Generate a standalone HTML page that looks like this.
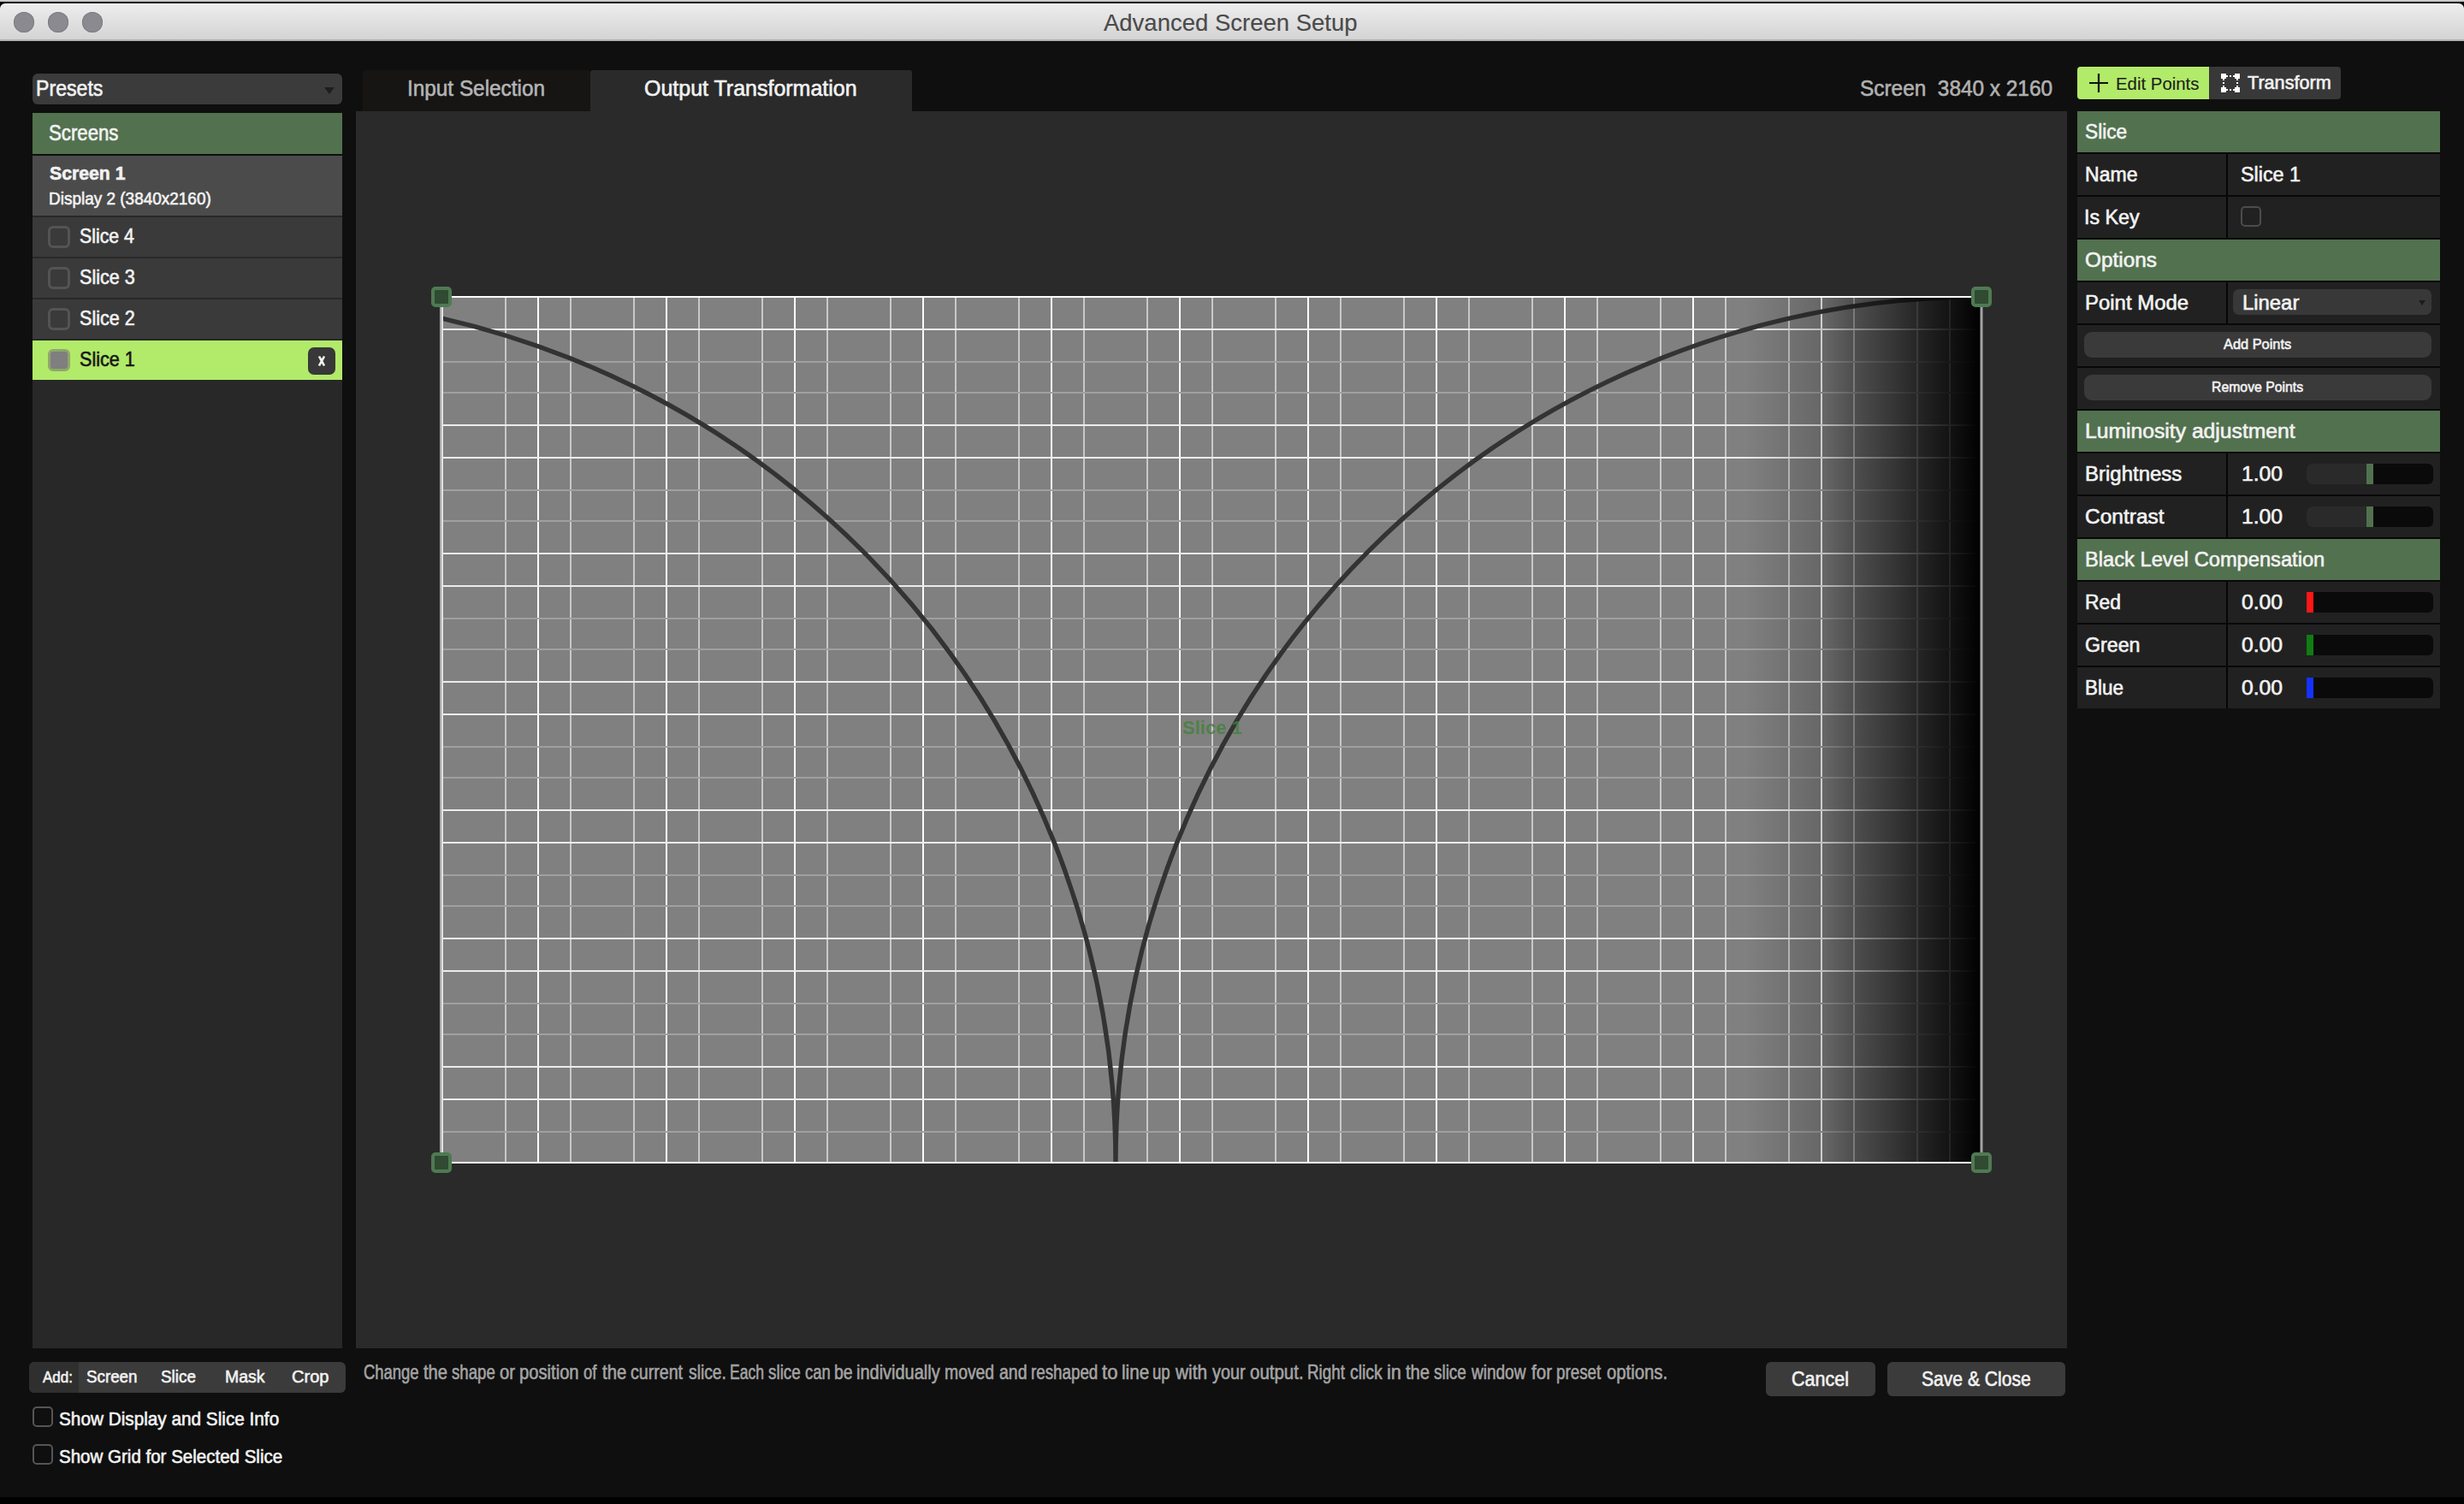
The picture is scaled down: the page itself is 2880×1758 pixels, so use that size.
<!DOCTYPE html>
<html><head><meta charset="utf-8"><title>Advanced Screen Setup</title>
<style>
html,body{margin:0;padding:0;width:2880px;height:1758px;overflow:hidden;background:#000;}
.r{position:absolute;box-sizing:content-box;}
.t{position:absolute;white-space:pre;line-height:1;font-family:"Liberation Sans",sans-serif;transform-origin:0 0;-webkit-text-stroke:0.6px currentColor;}
</style></head><body>
<div class="r" style="left:0px;top:0px;width:2880px;height:2px;background:#c9c9c9;"></div>
<div class="r" style="left:0px;top:2px;width:2880px;height:10px;background:#000;"></div>
<div class="r" style="left:0px;top:4px;width:2880px;height:42px;background:linear-gradient(#ffffff 0px,#ececec 2px,#d4d4d4 100%);border-radius:6px 6px 0 0"></div>
<div class="r" style="left:0px;top:46px;width:2880px;height:2px;background:#b2b2b2;"></div>
<div class="r" style="left:0px;top:48px;width:2880px;height:1702px;background:#0f0f0f;"></div>
<div class="r" style="left:16px;top:14px;width:24px;height:24px;border-radius:50%;background:#8c8a91;box-shadow:inset 0 0 0 1px #7d7b82"></div>
<div class="r" style="left:56px;top:14px;width:24px;height:24px;border-radius:50%;background:#8c8a91;box-shadow:inset 0 0 0 1px #7d7b82"></div>
<div class="r" style="left:96px;top:14px;width:24px;height:24px;border-radius:50%;background:#8c8a91;box-shadow:inset 0 0 0 1px #7d7b82"></div>
<div class="r" style="left:38px;top:86px;width:362px;height:36px;background:#3b3b3b;border-radius:6px"></div>
<svg class="r" style="left:378px;top:100px" width="14" height="12"><path d="M1 2 L13 2 L7 10 Z" fill="#1e1e1e"/></svg>
<div class="r" style="left:38px;top:132px;width:362px;height:48px;background:#52714f;"></div>
<div class="r" style="left:38px;top:182px;width:362px;height:1394px;background:#282828;"></div>
<div class="r" style="left:38px;top:182px;width:362px;height:70px;background:#4b4b4b;"></div>
<div class="r" style="left:38px;top:254px;width:362px;height:46px;background:#3a3a3a;"></div>
<div class="r" style="left:56px;top:264px;width:20px;height:20px;border:3px solid #545454;border-radius:6px"></div>
<div class="r" style="left:38px;top:302px;width:362px;height:46px;background:#3a3a3a;"></div>
<div class="r" style="left:56px;top:312px;width:20px;height:20px;border:3px solid #545454;border-radius:6px"></div>
<div class="r" style="left:38px;top:350px;width:362px;height:46px;background:#3a3a3a;"></div>
<div class="r" style="left:56px;top:360px;width:20px;height:20px;border:3px solid #545454;border-radius:6px"></div>
<div class="r" style="left:38px;top:398px;width:362px;height:46px;background:#b2ea6a;"></div>
<div class="r" style="left:56px;top:408px;width:20px;height:20px;border:3px solid #8fa86c;border-radius:6px;background:#7f7f7f"></div>
<div class="r" style="left:360px;top:406px;width:32px;height:32px;background:#383838;border-radius:7px"></div>
<svg class="r" style="left:360px;top:406px" width="32" height="32"><path d="M13 10.5 L16 16 L19 10.5 M13 21.5 L16 16 L19 21.5" fill="none" stroke="#f4f4f4" stroke-width="2.6" stroke-linejoin="miter"/></svg>
<div class="r" style="left:34px;top:1592px;width:370px;height:36px;background:#3b3b3b;border-radius:6px;overflow:hidden"></div>
<div class="r" style="left:34px;top:1592px;width:58px;height:36px;background:#2f2f2f;border-radius:6px 0 0 6px"></div>
<div class="r" style="left:38px;top:1644px;width:20px;height:20px;border:2.5px solid #555;border-radius:5px"></div>
<div class="r" style="left:38px;top:1688px;width:20px;height:20px;border:2.5px solid #555;border-radius:5px"></div>
<div class="r" style="left:424px;top:82px;width:266px;height:48px;background:#161513;border-radius:3px 3px 0 0"></div>
<div class="r" style="left:690px;top:82px;width:376px;height:48px;background:#2a2a2a;border-radius:3px 3px 0 0"></div>
<div class="r" style="left:416px;top:130px;width:2000px;height:1446px;background:#2a2a2a;"></div>
<div class="r" style="left:2064px;top:1592px;width:128px;height:40px;background:#3b3b3b;border-radius:6px"></div>
<div class="r" style="left:2206px;top:1592px;width:208px;height:40px;background:#3b3b3b;border-radius:6px"></div>
<div class="r" style="left:2428px;top:78px;width:308px;height:38px;background:#383838;border-radius:4px"></div>
<div class="r" style="left:2428px;top:78px;width:154px;height:38px;background:#b2ea6a;border-radius:4px 0 0 4px"></div>
<svg class="r" style="left:2440px;top:84px" width="26" height="26"><path d="M2 13 H24 M13 2 V24" stroke="#111" stroke-width="2.2"/></svg>
<svg class="r" style="left:2596px;top:86px" width="22" height="22" fill="#fff"><path d="M0 0 H6 V2 H8 V4 H6 V6 H4 V8 H2 V6 H0 Z M16 0 H22 V6 H20 V8 H18 V6 H16 V4 H14 V2 H16 Z M0 16 H2 V14 H4 V16 H6 V18 H8 V20 H6 V22 H0 Z M16 16 H18 V14 H20 V16 H22 V22 H16 V20 H14 V18 H16 Z"/><rect x="10" y="2" width="2" height="2"/><rect x="2" y="10" width="2" height="2"/><rect x="18" y="10" width="2" height="2"/><rect x="10" y="18" width="2" height="2"/></svg>
<div class="r" style="left:2428px;top:130px;width:424px;height:698px;background:#080808;"></div>
<div class="r" style="left:2428px;top:130px;width:424px;height:48px;background:#52714f;"></div>
<div class="r" style="left:2428px;top:180px;width:424px;height:48px;background:#212121;"></div>
<div class="r" style="left:2602px;top:180px;width:2px;height:48px;background:#050505;"></div>
<div class="r" style="left:2428px;top:230px;width:424px;height:48px;background:#212121;"></div>
<div class="r" style="left:2602px;top:230px;width:2px;height:48px;background:#050505;"></div>
<div class="r" style="left:2428px;top:280px;width:424px;height:48px;background:#52714f;"></div>
<div class="r" style="left:2428px;top:330px;width:424px;height:48px;background:#212121;"></div>
<div class="r" style="left:2602px;top:330px;width:2px;height:48px;background:#050505;"></div>
<div class="r" style="left:2428px;top:380px;width:424px;height:48px;background:#212121;"></div>
<div class="r" style="left:2428px;top:430px;width:424px;height:48px;background:#212121;"></div>
<div class="r" style="left:2428px;top:480px;width:424px;height:48px;background:#52714f;"></div>
<div class="r" style="left:2428px;top:530px;width:424px;height:48px;background:#212121;"></div>
<div class="r" style="left:2602px;top:530px;width:2px;height:48px;background:#050505;"></div>
<div class="r" style="left:2428px;top:580px;width:424px;height:48px;background:#212121;"></div>
<div class="r" style="left:2602px;top:580px;width:2px;height:48px;background:#050505;"></div>
<div class="r" style="left:2428px;top:630px;width:424px;height:48px;background:#52714f;"></div>
<div class="r" style="left:2428px;top:680px;width:424px;height:48px;background:#212121;"></div>
<div class="r" style="left:2602px;top:680px;width:2px;height:48px;background:#050505;"></div>
<div class="r" style="left:2428px;top:730px;width:424px;height:48px;background:#212121;"></div>
<div class="r" style="left:2602px;top:730px;width:2px;height:48px;background:#050505;"></div>
<div class="r" style="left:2428px;top:780px;width:424px;height:48px;background:#212121;"></div>
<div class="r" style="left:2602px;top:780px;width:2px;height:48px;background:#050505;"></div>
<div class="r" style="left:2619px;top:241px;width:20px;height:20px;border:2.5px solid #4c4c4c;border-radius:5px"></div>
<div class="r" style="left:2610px;top:338px;width:232px;height:30px;background:#383838;border-radius:7px"></div>
<svg class="r" style="left:2826px;top:350px" width="10" height="9"><path d="M1 1 L9 1 L5 7 Z" fill="#1c1c1c"/></svg>
<div class="r" style="left:2436px;top:388px;width:406px;height:30px;background:#3a3a3a;border-radius:9px"></div>
<div class="r" style="left:2436px;top:438px;width:406px;height:30px;background:#3a3a3a;border-radius:9px"></div>
<div class="r" style="left:2696px;top:542px;width:148px;height:24px;border-radius:6px;overflow:hidden;background:#0a0a0a"><div style="position:absolute;left:0;top:0;width:70px;height:24px;background:#2a2a2a"></div><div style="position:absolute;left:70px;top:0;width:8px;height:24px;background:#52714f"></div></div>
<div class="r" style="left:2696px;top:592px;width:148px;height:24px;border-radius:6px;overflow:hidden;background:#0a0a0a"><div style="position:absolute;left:0;top:0;width:70px;height:24px;background:#2a2a2a"></div><div style="position:absolute;left:70px;top:0;width:8px;height:24px;background:#52714f"></div></div>
<div class="r" style="left:2696px;top:692px;width:148px;height:24px;border-radius:6px;background:#0a0a0a"></div><div class="r" style="left:2696px;top:692px;width:8px;height:24px;background:#ff1616"></div>
<div class="r" style="left:2696px;top:742px;width:148px;height:24px;border-radius:6px;background:#0a0a0a"></div><div class="r" style="left:2696px;top:742px;width:8px;height:24px;background:#0f7d12"></div>
<div class="r" style="left:2696px;top:792px;width:148px;height:24px;border-radius:6px;background:#0a0a0a"></div><div class="r" style="left:2696px;top:792px;width:8px;height:24px;background:#1432ff"></div>
<svg class="r" style="left:496px;top:327px" width="1840" height="1052" viewBox="496 327 1840 1052">
<defs><linearGradient id="fade" x1="0" x2="1" y1="0" y2="0"><stop offset="0" stop-color="#000" stop-opacity="0"/><stop offset="0.18" stop-color="#000" stop-opacity="0.11"/><stop offset="0.33" stop-color="#000" stop-opacity="0.2"/><stop offset="0.46" stop-color="#000" stop-opacity="0.39"/><stop offset="0.636" stop-color="#000" stop-opacity="0.59"/><stop offset="0.73" stop-color="#000" stop-opacity="0.71"/><stop offset="0.87" stop-color="#000" stop-opacity="0.86"/><stop offset="1" stop-color="#000" stop-opacity="1"/></linearGradient>
<clipPath id="gc"><rect x="516" y="347" width="1800" height="1012"/></clipPath></defs>
<rect x="516" y="347" width="1800" height="1012" fill="#808080"/>
<rect x="590" y="347" width="2" height="1012" fill="#c8c8c8"/>
<rect x="628" y="347" width="2" height="1012" fill="#ffffff"/>
<rect x="666" y="347" width="2" height="1012" fill="#c8c8c8"/>
<rect x="740" y="347" width="2" height="1012" fill="#c8c8c8"/>
<rect x="778" y="347" width="2" height="1012" fill="#ffffff"/>
<rect x="816" y="347" width="2" height="1012" fill="#c8c8c8"/>
<rect x="890" y="347" width="2" height="1012" fill="#c8c8c8"/>
<rect x="928" y="347" width="2" height="1012" fill="#ffffff"/>
<rect x="966" y="347" width="2" height="1012" fill="#c8c8c8"/>
<rect x="1040" y="347" width="2" height="1012" fill="#c8c8c8"/>
<rect x="1078" y="347" width="2" height="1012" fill="#ffffff"/>
<rect x="1116" y="347" width="2" height="1012" fill="#c8c8c8"/>
<rect x="1190" y="347" width="2" height="1012" fill="#c8c8c8"/>
<rect x="1228" y="347" width="2" height="1012" fill="#ffffff"/>
<rect x="1266" y="347" width="2" height="1012" fill="#c8c8c8"/>
<rect x="1340" y="347" width="2" height="1012" fill="#c8c8c8"/>
<rect x="1378" y="347" width="2" height="1012" fill="#ffffff"/>
<rect x="1416" y="347" width="2" height="1012" fill="#c8c8c8"/>
<rect x="1490" y="347" width="2" height="1012" fill="#c8c8c8"/>
<rect x="1528" y="347" width="2" height="1012" fill="#ffffff"/>
<rect x="1566" y="347" width="2" height="1012" fill="#c8c8c8"/>
<rect x="1640" y="347" width="2" height="1012" fill="#c8c8c8"/>
<rect x="1678" y="347" width="2" height="1012" fill="#ffffff"/>
<rect x="1716" y="347" width="2" height="1012" fill="#c8c8c8"/>
<rect x="1790" y="347" width="2" height="1012" fill="#c8c8c8"/>
<rect x="1828" y="347" width="2" height="1012" fill="#ffffff"/>
<rect x="1866" y="347" width="2" height="1012" fill="#c8c8c8"/>
<rect x="1940" y="347" width="2" height="1012" fill="#c8c8c8"/>
<rect x="1978" y="347" width="2" height="1012" fill="#ffffff"/>
<rect x="2016" y="347" width="2" height="1012" fill="#c8c8c8"/>
<rect x="2090" y="347" width="2" height="1012" fill="#c8c8c8"/>
<rect x="2128" y="347" width="2" height="1012" fill="#ffffff"/>
<rect x="2166" y="347" width="2" height="1012" fill="#c8c8c8"/>
<rect x="2240" y="347" width="2" height="1012" fill="#c8c8c8"/>
<rect x="2278" y="347" width="2" height="1012" fill="#ffffff"/>
<rect x="516" y="384" width="1800" height="2" fill="#ececec"/>
<rect x="516" y="422" width="1800" height="2" fill="#a0a0a0"/>
<rect x="516" y="458" width="1800" height="2" fill="#a0a0a0"/>
<rect x="516" y="496" width="1800" height="2" fill="#ececec"/>
<rect x="516" y="534" width="1800" height="2" fill="#ececec"/>
<rect x="516" y="572" width="1800" height="2" fill="#a0a0a0"/>
<rect x="516" y="608" width="1800" height="2" fill="#a0a0a0"/>
<rect x="516" y="646" width="1800" height="2" fill="#ececec"/>
<rect x="516" y="684" width="1800" height="2" fill="#ececec"/>
<rect x="516" y="722" width="1800" height="2" fill="#a0a0a0"/>
<rect x="516" y="758" width="1800" height="2" fill="#a0a0a0"/>
<rect x="516" y="796" width="1800" height="2" fill="#ececec"/>
<rect x="516" y="834" width="1800" height="2" fill="#ececec"/>
<rect x="516" y="872" width="1800" height="2" fill="#a0a0a0"/>
<rect x="516" y="908" width="1800" height="2" fill="#a0a0a0"/>
<rect x="516" y="946" width="1800" height="2" fill="#ececec"/>
<rect x="516" y="984" width="1800" height="2" fill="#ececec"/>
<rect x="516" y="1022" width="1800" height="2" fill="#a0a0a0"/>
<rect x="516" y="1058" width="1800" height="2" fill="#a0a0a0"/>
<rect x="516" y="1096" width="1800" height="2" fill="#ececec"/>
<rect x="516" y="1134" width="1800" height="2" fill="#ececec"/>
<rect x="516" y="1172" width="1800" height="2" fill="#a0a0a0"/>
<rect x="516" y="1208" width="1800" height="2" fill="#a0a0a0"/>
<rect x="516" y="1246" width="1800" height="2" fill="#ececec"/>
<rect x="516" y="1284" width="1800" height="2" fill="#ececec"/>
<rect x="516" y="1322" width="1800" height="2" fill="#a0a0a0"/>
<g clip-path="url(#gc)"><path d="M 292 347 A 1012 1012 0 0 1 1304 1359 A 1012 1012 0 0 1 2316 347" fill="none" stroke="#333333" stroke-width="5.4"/></g>
<rect x="2040" y="347" width="276" height="1012" fill="url(#fade)"/>
<rect x="514" y="346" width="1804" height="2" fill="#ffffff"/>
<rect x="514" y="1358" width="1804" height="2" fill="#ffffff"/>
<rect x="514" y="347" width="1.5" height="1012" fill="#a8a8a8"/>
<rect x="515.5" y="347" width="2.5" height="1012" fill="#e2e2e2"/>
<rect x="2314.5" y="347" width="3" height="1012" fill="#a4a4a4"/>
<rect x="506" y="337" width="20" height="20" rx="3" fill="#304b32" stroke="#4f7a52" stroke-width="4"/>
<rect x="2306" y="337" width="20" height="20" rx="3" fill="#304b32" stroke="#4f7a52" stroke-width="4"/>
<rect x="506" y="1349" width="20" height="20" rx="3" fill="#304b32" stroke="#4f7a52" stroke-width="4"/>
<rect x="2306" y="1349" width="20" height="20" rx="3" fill="#304b32" stroke="#4f7a52" stroke-width="4"/>
</svg>
<span class="t" style="left:1290.0px;top:12.7px;font-size:27.54px;color:#4a4a4a;font-weight:normal;transform:scaleX(0.9985);-webkit-text-stroke:0.15px currentColor">Advanced Screen Setup</span>
<span class="t" style="left:42.2px;top:91.2px;font-size:25.22px;color:#f2f2f2;font-weight:normal;transform:scaleX(0.9174);">Presets</span>
<span class="t" style="left:57.1px;top:143.2px;font-size:25.22px;color:#f2f2f2;font-weight:normal;transform:scaleX(0.8805);">Screens</span>
<span class="t" style="left:58.0px;top:191.5px;font-size:22.46px;color:#f2f2f2;font-weight:bold;transform:scaleX(0.9449);">Screen 1</span>
<span class="t" style="left:57.1px;top:222.4px;font-size:20.29px;color:#f2f2f2;font-weight:normal;transform:scaleX(0.9352);">Display 2 (3840x2160)</span>
<span class="t" style="left:93.1px;top:264.9px;font-size:23.19px;color:#f2f2f2;font-weight:normal;transform:scaleX(0.9175);">Slice 4</span>
<span class="t" style="left:93.1px;top:312.9px;font-size:23.19px;color:#f2f2f2;font-weight:normal;transform:scaleX(0.9311);">Slice 3</span>
<span class="t" style="left:93.1px;top:360.9px;font-size:23.19px;color:#f2f2f2;font-weight:normal;transform:scaleX(0.9311);">Slice 2</span>
<span class="t" style="left:93.1px;top:408.9px;font-size:23.19px;color:#161616;font-weight:normal;transform:scaleX(0.9311);">Slice 1</span>
<span class="t" style="left:50.0px;top:1601.2px;font-size:18.12px;color:#f2f2f2;font-weight:normal;transform:scaleX(0.9387);">Add:</span>
<span class="t" style="left:101.0px;top:1599.0px;font-size:20.72px;color:#f2f2f2;font-weight:normal;transform:scaleX(0.9060);">Screen</span>
<span class="t" style="left:188.0px;top:1599.0px;font-size:20.72px;color:#f2f2f2;font-weight:normal;transform:scaleX(0.9125);">Slice</span>
<span class="t" style="left:263.1px;top:1599.0px;font-size:20.72px;color:#f2f2f2;font-weight:normal;transform:scaleX(0.9361);">Mask</span>
<span class="t" style="left:341.0px;top:1599.0px;font-size:20.72px;color:#f2f2f2;font-weight:normal;transform:scaleX(0.9681);">Crop</span>
<span class="t" style="left:69.1px;top:1647.9px;font-size:22.03px;color:#f2f2f2;font-weight:normal;transform:scaleX(0.9424);">Show Display and Slice Info</span>
<span class="t" style="left:69.1px;top:1692.4px;font-size:22.03px;color:#f2f2f2;font-weight:normal;transform:scaleX(0.9320);">Show Grid for Selected Slice</span>
<span class="t" style="left:476.1px;top:91.0px;font-size:25.36px;color:#b4b4b4;font-weight:normal;transform:scaleX(0.9595);">Input Selection</span>
<span class="t" style="left:753.0px;top:91.0px;font-size:25.36px;color:#f2f2f2;font-weight:normal;transform:scaleX(0.9854);">Output Transformation</span>
<span class="t" style="left:2174.0px;top:91.0px;font-size:25.36px;color:#b0b0b0;font-weight:normal;transform:scaleX(0.9616);">Screen  3840 x 2160</span>
<span class="t" style="left:424.9px;top:1592.9px;font-size:23.19px;color:#a4a4a4;font-weight:normal;transform:scaleX(0.7946);">Change</span>
<span class="t" style="left:494.7px;top:1592.9px;font-size:23.19px;color:#a4a4a4;font-weight:normal;transform:scaleX(0.8715);">the</span>
<span class="t" style="left:528.0px;top:1592.9px;font-size:23.19px;color:#a4a4a4;font-weight:normal;transform:scaleX(0.8032);">shape</span>
<span class="t" style="left:584.0px;top:1592.9px;font-size:23.19px;color:#a4a4a4;font-weight:normal;transform:scaleX(0.8761);">or</span>
<span class="t" style="left:607.4px;top:1592.9px;font-size:23.19px;color:#a4a4a4;font-weight:normal;transform:scaleX(0.8707);">position</span>
<span class="t" style="left:682.2px;top:1592.9px;font-size:23.19px;color:#a4a4a4;font-weight:normal;transform:scaleX(0.7945);">of</span>
<span class="t" style="left:704.0px;top:1592.9px;font-size:23.19px;color:#a4a4a4;font-weight:normal;transform:scaleX(0.8747);">the</span>
<span class="t" style="left:737.4px;top:1592.9px;font-size:23.19px;color:#a4a4a4;font-weight:normal;transform:scaleX(0.8462);">current</span>
<span class="t" style="left:804.9px;top:1592.9px;font-size:23.19px;color:#a4a4a4;font-weight:normal;transform:scaleX(0.8315);">slice.</span>
<span class="t" style="left:852.8px;top:1592.9px;font-size:23.19px;color:#a4a4a4;font-weight:normal;transform:scaleX(0.7579);">Each</span>
<span class="t" style="left:898.2px;top:1592.9px;font-size:23.19px;color:#a4a4a4;font-weight:normal;transform:scaleX(0.8138);">slice</span>
<span class="t" style="left:941.2px;top:1592.9px;font-size:23.19px;color:#a4a4a4;font-weight:normal;transform:scaleX(0.7924);">can</span>
<span class="t" style="left:975.3px;top:1592.9px;font-size:23.19px;color:#a4a4a4;font-weight:normal;transform:scaleX(0.8373);">be</span>
<span class="t" style="left:1001.2px;top:1592.9px;font-size:23.19px;color:#a4a4a4;font-weight:normal;transform:scaleX(0.8611);">individually</span>
<span class="t" style="left:1104.4px;top:1592.9px;font-size:23.19px;color:#a4a4a4;font-weight:normal;transform:scaleX(0.8350);">moved</span>
<span class="t" style="left:1167.7px;top:1592.9px;font-size:23.19px;color:#a4a4a4;font-weight:normal;transform:scaleX(0.8392);">and</span>
<span class="t" style="left:1204.6px;top:1592.9px;font-size:23.19px;color:#a4a4a4;font-weight:normal;transform:scaleX(0.8096);">reshaped</span>
<span class="t" style="left:1288.1px;top:1592.9px;font-size:23.19px;color:#a4a4a4;font-weight:normal;transform:scaleX(0.9546);">to</span>
<span class="t" style="left:1310.8px;top:1592.9px;font-size:23.19px;color:#a4a4a4;font-weight:normal;transform:scaleX(0.8923);">line</span>
<span class="t" style="left:1347.4px;top:1592.9px;font-size:23.19px;color:#a4a4a4;font-weight:normal;transform:scaleX(0.8038);">up</span>
<span class="t" style="left:1374.3px;top:1592.9px;font-size:23.19px;color:#a4a4a4;font-weight:normal;transform:scaleX(0.8979);">with</span>
<span class="t" style="left:1416.5px;top:1592.9px;font-size:23.19px;color:#a4a4a4;font-weight:normal;transform:scaleX(0.8532);">your</span>
<span class="t" style="left:1461.2px;top:1592.9px;font-size:23.19px;color:#a4a4a4;font-weight:normal;transform:scaleX(0.8830);">output.</span>
<span class="t" style="left:1527.7px;top:1592.9px;font-size:23.19px;color:#a4a4a4;font-weight:normal;transform:scaleX(0.8107);">Right</span>
<span class="t" style="left:1578.0px;top:1592.9px;font-size:23.19px;color:#a4a4a4;font-weight:normal;transform:scaleX(0.8336);">click</span>
<span class="t" style="left:1621.0px;top:1592.9px;font-size:23.19px;color:#a4a4a4;font-weight:normal;transform:scaleX(0.9351);">in</span>
<span class="t" style="left:1643.0px;top:1592.9px;font-size:23.19px;color:#a4a4a4;font-weight:normal;transform:scaleX(0.8715);">the</span>
<span class="t" style="left:1676.3px;top:1592.9px;font-size:23.19px;color:#a4a4a4;font-weight:normal;transform:scaleX(0.8138);">slice</span>
<span class="t" style="left:1720.1px;top:1592.9px;font-size:23.19px;color:#a4a4a4;font-weight:normal;transform:scaleX(0.8199);">window</span>
<span class="t" style="left:1789.7px;top:1592.9px;font-size:23.19px;color:#a4a4a4;font-weight:normal;transform:scaleX(0.8856);">for</span>
<span class="t" style="left:1819.1px;top:1592.9px;font-size:23.19px;color:#a4a4a4;font-weight:normal;transform:scaleX(0.8098);">preset</span>
<span class="t" style="left:1877.7px;top:1592.9px;font-size:23.19px;color:#a4a4a4;font-weight:normal;transform:scaleX(0.8756);">options.</span>
<span class="t" style="left:2094.1px;top:1601.4px;font-size:23.19px;color:#f2f2f2;font-weight:normal;transform:scaleX(0.9288);">Cancel</span>
<span class="t" style="left:2246.1px;top:1601.4px;font-size:23.19px;color:#f2f2f2;font-weight:normal;transform:scaleX(0.9097);">Save &amp; Close</span>
<span class="t" style="left:2473.0px;top:86.7px;font-size:21.01px;color:#1c1c1c;font-weight:normal;transform:scaleX(0.9708);-webkit-text-stroke:0.1px currentColor">Edit Points</span>
<span class="t" style="left:2627.0px;top:86.1px;font-size:21.74px;color:#f2f2f2;font-weight:normal;transform:scaleX(0.9943);">Transform</span>
<span class="t" style="left:2437.0px;top:142.3px;font-size:23.91px;color:#f2f2f2;font-weight:normal;transform:scaleX(0.9501);">Slice</span>
<span class="t" style="left:2437.0px;top:192.6px;font-size:23.48px;color:#f2f2f2;font-weight:normal;transform:scaleX(0.9829);">Name</span>
<span class="t" style="left:2619.0px;top:192.6px;font-size:23.48px;color:#f2f2f2;font-weight:normal;transform:scaleX(0.9943);">Slice 1</span>
<span class="t" style="left:2436.0px;top:242.6px;font-size:23.48px;color:#f2f2f2;font-weight:normal;transform:scaleX(0.9924);">Is Key</span>
<span class="t" style="left:2437.0px;top:292.3px;font-size:23.91px;color:#f2f2f2;font-weight:normal;transform:scaleX(1.0192);">Options</span>
<span class="t" style="left:2437.0px;top:342.6px;font-size:23.48px;color:#f2f2f2;font-weight:normal;transform:scaleX(1.0198);">Point Mode</span>
<span class="t" style="left:2621.0px;top:342.6px;font-size:23.48px;color:#f2f2f2;font-weight:normal;transform:scaleX(1.0167);">Linear</span>
<span class="t" style="left:2598.5px;top:393.8px;font-size:17.39px;color:#f2f2f2;font-weight:normal;transform:scaleX(0.9426);">Add Points</span>
<span class="t" style="left:2584.6px;top:443.8px;font-size:17.39px;color:#f2f2f2;font-weight:normal;transform:scaleX(0.9093);">Remove Points</span>
<span class="t" style="left:2437.0px;top:492.3px;font-size:23.91px;color:#f2f2f2;font-weight:normal;transform:scaleX(1.0329);">Luminosity adjustment</span>
<span class="t" style="left:2437.0px;top:542.6px;font-size:23.48px;color:#f2f2f2;font-weight:normal;transform:scaleX(1.0216);">Brightness</span>
<span class="t" style="left:2619.9px;top:542.6px;font-size:23.48px;color:#f2f2f2;font-weight:normal;transform:scaleX(1.0532);">1.00</span>
<span class="t" style="left:2437.0px;top:592.6px;font-size:23.48px;color:#f2f2f2;font-weight:normal;transform:scaleX(1.0434);">Contrast</span>
<span class="t" style="left:2619.9px;top:592.6px;font-size:23.48px;color:#f2f2f2;font-weight:normal;transform:scaleX(1.0532);">1.00</span>
<span class="t" style="left:2437.0px;top:642.3px;font-size:23.91px;color:#f2f2f2;font-weight:normal;transform:scaleX(0.9902);">Black Level Compensation</span>
<span class="t" style="left:2437.0px;top:692.6px;font-size:23.48px;color:#f2f2f2;font-weight:normal;transform:scaleX(0.9756);">Red</span>
<span class="t" style="left:2620.0px;top:692.6px;font-size:23.48px;color:#f2f2f2;font-weight:normal;transform:scaleX(1.0521);">0.00</span>
<span class="t" style="left:2437.0px;top:742.6px;font-size:23.48px;color:#f2f2f2;font-weight:normal;transform:scaleX(0.9893);">Green</span>
<span class="t" style="left:2620.0px;top:742.6px;font-size:23.48px;color:#f2f2f2;font-weight:normal;transform:scaleX(1.0521);">0.00</span>
<span class="t" style="left:2437.0px;top:792.6px;font-size:23.48px;color:#f2f2f2;font-weight:normal;transform:scaleX(0.9582);">Blue</span>
<span class="t" style="left:2620.0px;top:792.6px;font-size:23.48px;color:#f2f2f2;font-weight:normal;transform:scaleX(1.0521);">0.00</span>
<span class="t" style="left:1382.0px;top:840.1px;font-size:21.16px;color:rgba(66,128,58,0.78);font-weight:bold;transform:scaleX(1.0411);-webkit-text-stroke:0">Slice 1</span>
</body></html>
